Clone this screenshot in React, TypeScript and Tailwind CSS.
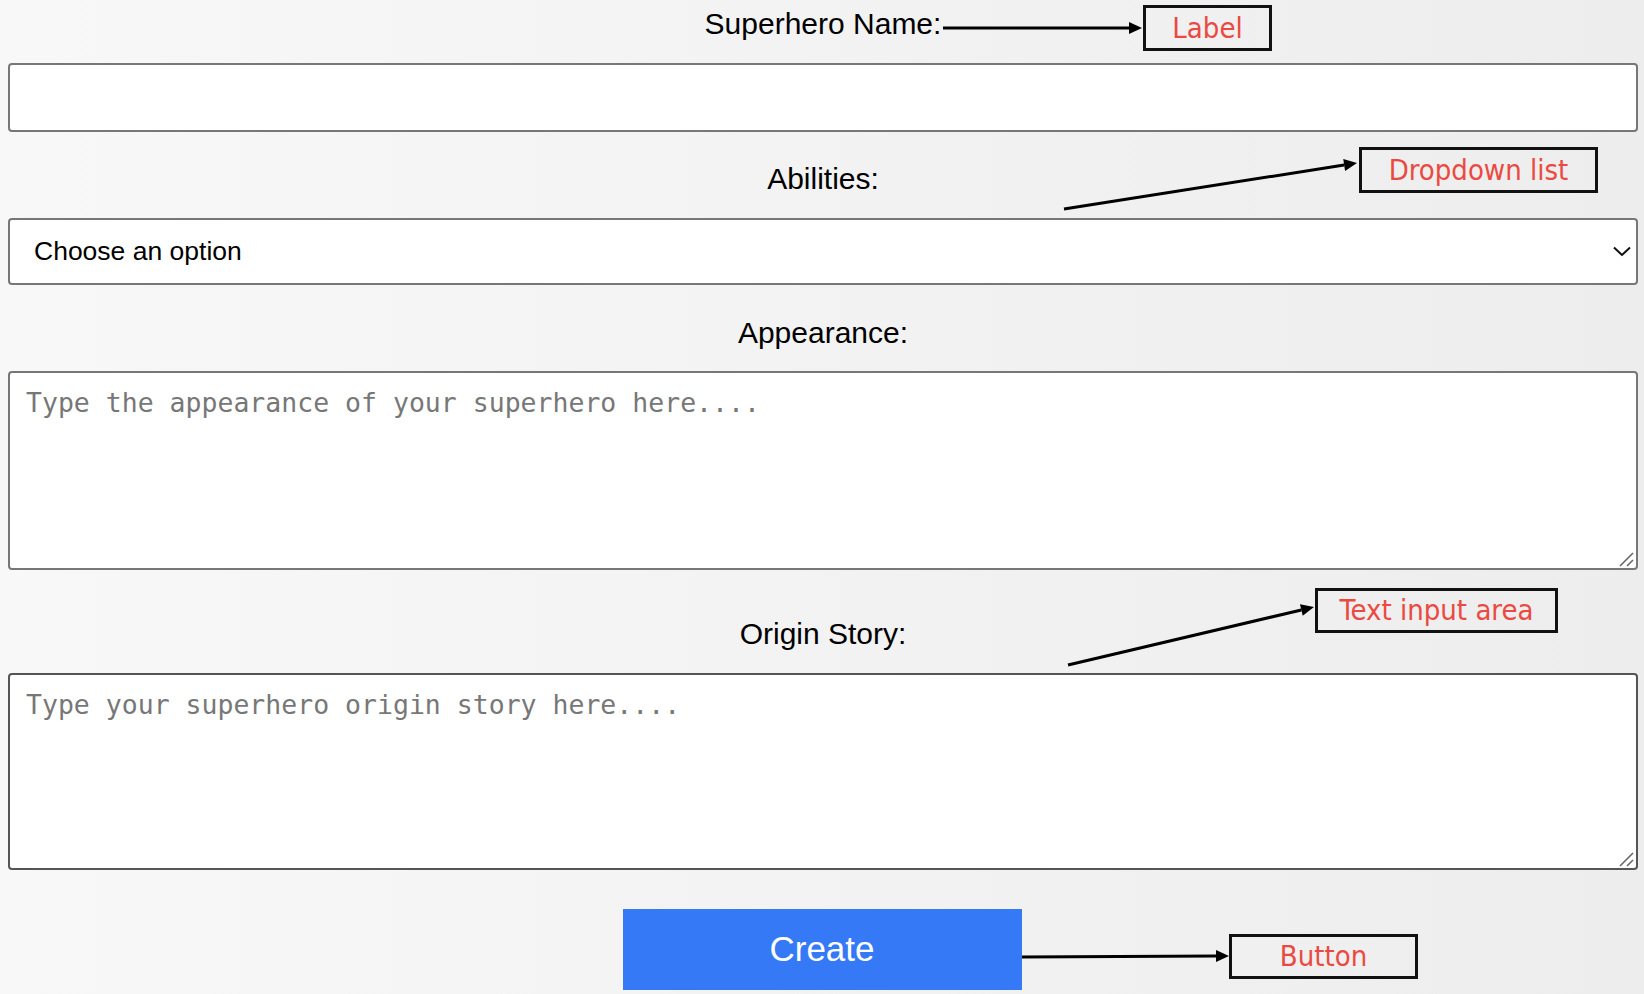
const Arrow = ({ x1, y1, x2, y2 }: { x1: number; y1: number; x2: number; y2: number }) => {
  // line plus a filled head whose tip sits at (x2, y2)
  const a = Math.atan2(y2 - y1, x2 - x1);
  const len = 13;
  const half = 6;
  const bx = x2 - len * Math.cos(a);
  const by = y2 - len * Math.sin(a);
  const p1 = `${bx + half * Math.sin(a)},${by - half * Math.cos(a)}`;
  const p2 = `${bx - half * Math.sin(a)},${by + half * Math.cos(a)}`;
  return (
    <g>
      <line x1={x1} y1={y1} x2={bx} y2={by} stroke="#000" strokeWidth={3} />
      <polygon points={`${x2},${y2} ${p1} ${p2}`} fill="#000" />
    </g>
  );
};

const Note = ({ text, className }: { text: string; className: string }) => (
  <div
    className={`absolute flex items-center justify-center border-[3px] border-[#111] text-[29px] leading-none text-[#ea4a42] font-stretch-condensed font-['DejaVu_Sans_Condensed','DejaVu_Sans',sans-serif] ${className}`}
  >
    {text}
  </div>
);

const Grip = () => (
  <svg className="pointer-events-none absolute bottom-[3px] right-[3px]" width="16" height="16" viewBox="0 0 16 16">
    <line x1="1" y1="15" x2="14" y2="2" stroke="#666" strokeWidth="1.6" />
    <line x1="8" y1="15" x2="14" y2="9" stroke="#666" strokeWidth="1.6" />
  </svg>
);

const App = () => {
  return (
    <div className="relative h-[994px] w-full overflow-hidden bg-gradient-to-r from-[#f8f8f8] to-[#ededed] font-['Liberation_Sans',Arial,sans-serif] text-black">
      <form className="flex flex-col pl-2 pr-[6px]">
        {/* Name */}
        <label className="mt-2 h-8 text-center text-[30px] leading-8">Superhero Name:</label>
        <input
          type="text"
          className="mt-[23px] h-[69px] w-full rounded-[4px] border-2 border-[#777] bg-white px-4 text-[26px] outline-none"
        />

        {/* Abilities */}
        <label className="mt-[31px] h-8 text-center text-[30px] leading-8">Abilities:</label>
        <div className="relative mt-[23px]">
          <select className="h-[67px] w-full appearance-none rounded-[4px] border-2 border-[#777] bg-white pl-[24px] text-[26.5px] text-black outline-none">
            <option>Choose an option</option>
            <option>Flight</option>
            <option>Super strength</option>
            <option>Invisibility</option>
          </select>
          <svg className="pointer-events-none absolute right-[6px] top-[28px]" width="20" height="11" viewBox="0 0 20 11">
            <polyline points="2,1.5 10,9 18,1.5" fill="none" stroke="#111" strokeWidth="2" />
          </svg>
        </div>

        {/* Appearance */}
        <label className="mt-8 h-8 text-center text-[30px] leading-8">Appearance:</label>
        <div className="relative mt-[22px]">
          <textarea
            placeholder="Type the appearance of your superhero here...."
            className="block h-[199px] w-full resize-none rounded-[4px] border-2 border-[#777] bg-white px-4 py-[14px] font-['DejaVu_Sans_Mono',monospace] text-[26.5px] leading-8 outline-none placeholder:text-[#777]"
          />
          <Grip />
        </div>

        {/* Origin */}
        <label className="mt-12 h-8 text-center text-[30px] leading-8">Origin Story:</label>
        <div className="relative mt-[23px]">
          <textarea
            placeholder="Type your superhero origin story here...."
            className="block h-[197px] w-full resize-none rounded-[4px] border-2 border-[#555] bg-white px-4 py-[14px] font-['DejaVu_Sans_Mono',monospace] text-[26.5px] leading-8 outline-none placeholder:text-[#777]"
          />
          <Grip />
        </div>

        <div className="mt-[39px] flex justify-center pr-[2px]">
          <button type="button" className="h-[81px] w-[399px] bg-[#3579f6] text-[35px] text-white">
            Create
          </button>
        </div>
      </form>

      {/* annotation overlay */}
      <svg className="pointer-events-none absolute left-0 top-0" width="1644" height="994" viewBox="0 0 1644 994">
        <Arrow x1={943} y1={28} x2={1142} y2={28} />
        <Arrow x1={1064} y1={209} x2={1357} y2={163} />
        <Arrow x1={1068} y1={665} x2={1314} y2={607} />
        <Arrow x1={1022} y1={957} x2={1229} y2={956} />
      </svg>
      <Note text="Label" className="left-[1143px] top-[5px] h-[46px] w-[129px]" />
      <Note text="Dropdown list" className="left-[1359px] top-[147px] h-[46px] w-[239px]" />
      <Note text="Text input area" className="left-[1315px] top-[588px] h-[45px] w-[243px]" />
      <Note text="Button" className="left-[1229px] top-[934px] h-[45px] w-[189px]" />
    </div>
  );
};

export default App;
